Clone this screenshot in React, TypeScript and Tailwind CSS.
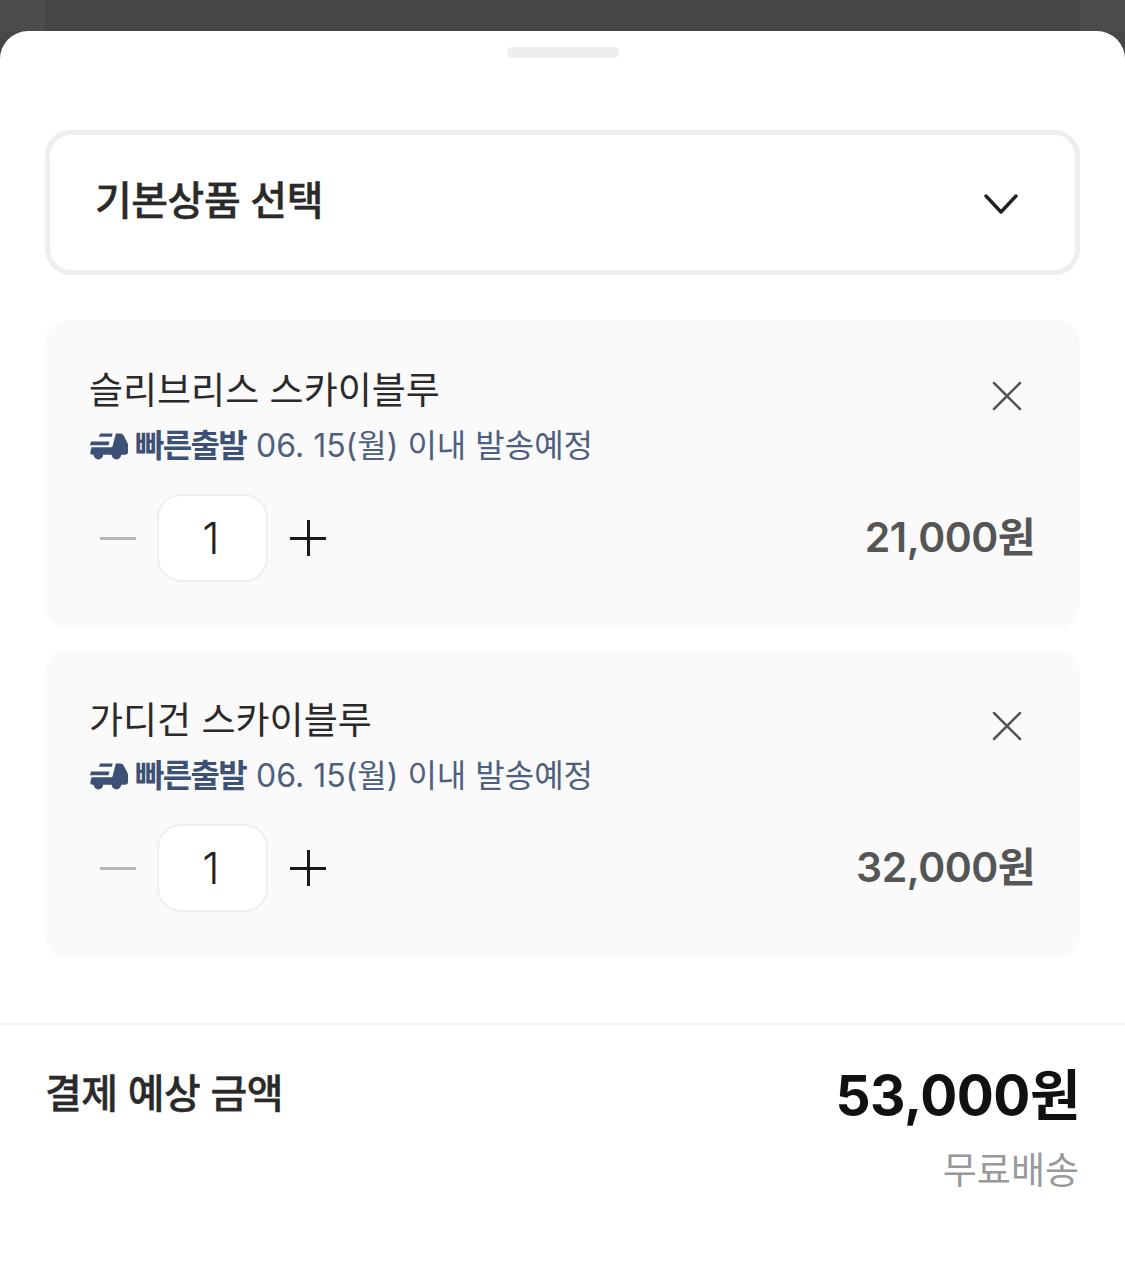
const TruckIcon = () => (
  <svg width="40" height="27" viewBox="2 0.500 37 25.500" className="shrink-0" fill="#3d5076">
    <path d="M12 1h12l-1 3H11z" />
    <path d="M3.500 8.500H21l-1 3.500H2.500z" />
    <path d="M27 1h4c2 0 3 1 4 3l3 6c.5 1 .5 2 .5 3v5c0 2-1 3-3 3H32a4.500 4.500 0 0 1-9 0h-8a4.500 4.500 0 0 1-9 0H5c-2 0-2.500-1-2-3l1-4h18c1 0 2-.5 2-1.500L27 1z" />
  </svg>
)

const CloseIcon = () => (
  <svg width="30" height="30" viewBox="0 0 30 30" className="mt-[9px] shrink-0" fill="none" stroke="#555555" strokeWidth="2.500" strokeLinecap="round">
    <path d="M2 2l26 26M28 2L2 28" />
  </svg>
)

const Item = ({ name, price }: { name: string; price: string }) => {
  return (
    <div className="rounded-[24px] bg-[#fafafa] pl-[45px] pr-[45px] pt-[45px] pb-[45.500px]">
      <div className="flex items-center justify-between">
        <p className="ml-[-1px] text-[37px] leading-[52px] text-[#2a2a2a]">{name}</p>
        <div className="mr-[13px]">
          <CloseIcon />
        </div>
      </div>
      <div className="ml-[-1px] mt-[7px] flex h-[44px] items-center text-[32px] text-[#4f5f7e]">
        <TruckIcon />
        <span className="ml-[6px] font-bold tracking-[-1.700px] text-[#3d5076]">빠른출발</span>
        <span className="ml-[10px]">06. 15(월) 이내 발송예정</span>
      </div>
      <div className="mt-[26px] flex items-center justify-between">
        <div className="flex items-center">
          <span className="ml-[10px] h-[3px] w-[36px] bg-[#b4b8bc]" />
          <div className="ml-[21px] flex h-[88px] w-[111px] items-center justify-center rounded-[24px] border-2 border-[#eeeeee] bg-white pr-[3px] text-[44px] font-light text-[#222222]">
            1
          </div>
          <div className="relative ml-[22px] h-[36px] w-[36px]">
            <span className="absolute left-0 top-[16.500px] h-[3px] w-[36px] bg-[#1a1a1a]" />
            <span className="absolute left-[16.500px] top-0 h-[36px] w-[3px] bg-[#1a1a1a]" />
          </div>
        </div>
        <p className="text-[41px] font-semibold tracking-[-0.500px] text-[#555555]">{price}</p>
      </div>
    </div>
  )
}

const App = () => {
  return (
    <div className="h-[1263px] w-[1125px] overflow-hidden bg-[#474644] font-['Inter','Noto_Sans_CJK_KR',sans-serif]">
      <div className="flex h-[31px]">
        <div className="w-[45px] bg-[#4d4c4b]" />
        <div className="flex-1" />
        <div className="w-[45px] bg-[#4d4c4b]" />
      </div>
      <div className="h-[1232px] rounded-t-[28px] bg-white">
        <div className="flex justify-center pt-[16px]">
          <div className="h-[11px] w-[112px] rounded-full bg-[#eeeeee]" />
        </div>
        <div className="px-[45px] pt-[72px]">
          <div className="flex h-[145px] items-center justify-between rounded-[26px] border-[5px] border-[#eeeeee] pl-[45px] pr-[56px]">
            <p className="mt-[-4px] text-[40px] font-medium tracking-[-0.500px] text-[#2a2a2a] [-webkit-text-stroke:0.4px_#2a2a2a]">기본상품 선택</p>
            <svg width="36" height="24" viewBox="0 0 36 24" className="mt-[2px]" fill="none" stroke="#222222" strokeWidth="3.400" strokeLinecap="round" strokeLinejoin="round">
              <path d="M3 4l15 16L33 4" />
            </svg>
          </div>
          <div className="mt-[45px] flex flex-col gap-[22.500px]">
            <Item name="슬리브리스 스카이블루" price="21,000원" />
            <Item name="가디건 스카이블루" price="32,000원" />
          </div>
        </div>
        <div className="mt-[65px] h-[2px] bg-[#f3f3f3]" />
        <div className="flex items-start justify-between px-[45px] pt-[36px]">
          <p className="mt-[3px] text-[40px] font-medium tracking-[-0.500px] text-[#2a2a2a] [-webkit-text-stroke:0.4px_#2a2a2a]">결제 예상 금액</p>
          <div className="flex flex-col items-end">
            <p className="text-[55px] font-bold leading-[68px] tracking-[-0.500px] text-[#111111]">53,000원</p>
            <p className="mr-[1px] mt-[16px] text-[37px] leading-[52px] text-[#999999]">무료배송</p>
          </div>
        </div>
      </div>
    </div>
  )
}

export default App
